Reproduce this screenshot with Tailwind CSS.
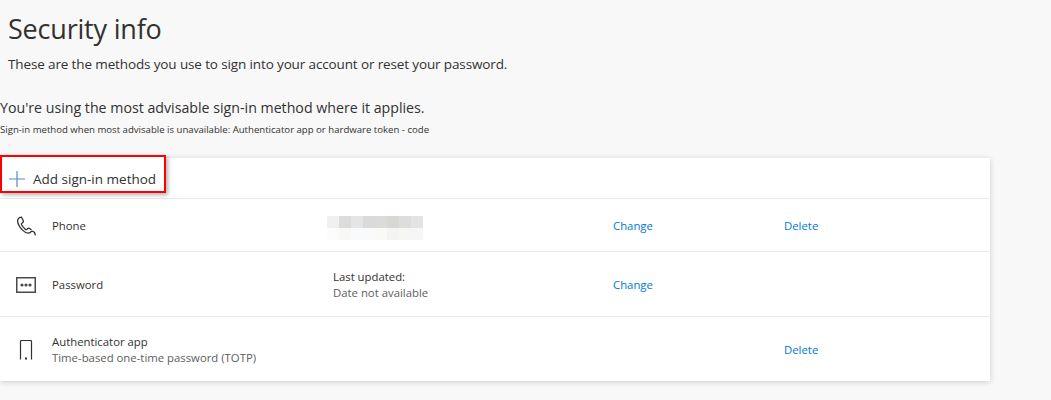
<!DOCTYPE html>
<html lang="en">
<head>
  <meta charset="UTF-8">
  <title>Security info</title>
  <script src="https://cdn.jsdelivr.net/npm/@tailwindcss/browser@4"></script>
</head>
<body class="h-[400px] overflow-hidden bg-[#f8f8f8] font-['Open_Sans',sans-serif] text-[#323130]">

  <!-- Heading -->
  <div class="pl-2 pt-[11px]">
    <h1 class="text-[27px] leading-[36px] tracking-[-0.2px]">Security info</h1>
    <p class="mt-[8px] text-[13.5px] leading-[18px] tracking-[-0.13px]">These are the methods you use to sign into your account or reset your password.</p>
  </div>

  <div class="mt-[25px]">
    <p class="text-[14.2px] leading-[20px]">You're using the most advisable sign-in method where it applies.</p>
    <p class="mt-[6px] text-[9.6px] leading-[12px]">Sign-in method when most advisable is unavailable: Authenticator app or hardware token - code</p>
  </div>

  <!-- Methods card -->
  <div class="relative mt-[22px] w-[990px] bg-white shadow-[0_1px_6px_rgba(0,0,0,0.18)]">
    <div class="h-[41px] border-b border-[#e8e8e8]"></div>

    <!-- Highlighted add button -->
    <div class="absolute left-0 top-[-3px] flex h-[38px] w-[166px] items-center border-2 border-[#ff0000] bg-white pl-[7px] pt-[10px] shadow-[2px_2px_4px_rgba(0,0,0,0.3)]">
      <svg class="h-4 w-4 shrink-0" viewBox="0 0 16 16"><path d="M8 0v16M0 8h16" stroke="#4f8fca" stroke-width="1.2" fill="none"/></svg>
      <span class="ml-[8px] text-[13.5px] leading-[18px]">Add sign-in method</span>
    </div>

    <!-- Phone -->
    <div class="grid h-[53px] grid-cols-[52px_280px_281px_171px_1fr] items-center border-b border-[#e8e8e8] pt-[2px] text-[11.35px] leading-[16px]">
      <div class="pl-[16px]">
        <svg class="h-[20px] w-[21px]" viewBox="0 0 21 20" fill="none"><path d="M5.5 1.2C3.6 1.2 1.2 2.6 1.6 5.4c.5 3.2 2.7 6.6 5.2 9 1.6 1.500 3.400 2.800 5.200 2.800 1.300 0 2.300-.7 3-1.500.6-.7 1.500-.7 2.200-.2l1.300 1 .8 2.300M5.500 1.200l1.800 3.600c.3.600.1 1.200-.4 1.600l-1 .8c-.5.400-.6 1-.3 1.600.9 1.700 2.200 3.200 3.700 4.500.5.400 1.200.4 1.700 0l.8-.7c.5-.4 1.200-.5 1.800-.1l1.500 1" stroke="#323130" stroke-width="1.300" stroke-linecap="round" stroke-linejoin="round"/></svg>
      </div>
      <div>Phone</div>
      <div class="-ml-[5px] mt-[4px] grid w-[96px] grid-cols-8">
        <span class="h-3 bg-[#f0f0f0]"></span><span class="h-3 bg-[#dcdcda]"></span><span class="h-3 bg-[#e4e6e5]"></span><span class="h-3 bg-[#dadada]"></span><span class="h-3 bg-[#dbdbd9]"></span><span class="h-3 bg-[#d8d7d4]"></span><span class="h-3 bg-[#dddddc]"></span><span class="h-3 bg-[#e2e3e5]"></span>
        <span class="h-3 bg-[#fcfcfc]"></span><span class="h-3 bg-[#f8f8f6]"></span><span class="h-3 bg-[#f8fafc]"></span><span class="h-3 bg-[#fafafa]"></span><span class="h-3 bg-[#f9f9f8]"></span><span class="h-3 bg-[#f4f4f2]"></span><span class="h-3 bg-[#f6f6f5]"></span><span class="h-3 bg-[#f5f6f6]"></span>
      </div>
      <a class="text-[#0078d4]">Change</a>
      <a class="text-[#0078d4]">Delete</a>
    </div>

    <!-- Password -->
    <div class="grid h-[65px] grid-cols-[52px_280px_281px_171px_1fr] items-center border-b border-[#e8e8e8] pt-[2px] text-[11.35px] leading-[16px]">
      <div class="pl-[16px]">
        <svg class="h-[18px] w-[20px]" viewBox="0 0 20 18" fill="none"><rect x="0.75" y="1.750" width="18.500" height="14.500" stroke="#4a4a4a" stroke-width="1.500"/><circle cx="6" cy="9" r="1.600" fill="#4a4a4a"/><circle cx="10" cy="9" r="1.600" fill="#4a4a4a"/><circle cx="14" cy="9" r="1.600" fill="#4a4a4a"/></svg>
      </div>
      <div>Password</div>
      <div class="pl-px">
        <div>Last updated:</div>
        <div class="text-[#605e5c]">Date not available</div>
      </div>
      <a class="text-[#0078d4]">Change</a>
      <span></span>
    </div>

    <!-- Authenticator app -->
    <div class="grid h-[64px] grid-cols-[52px_732px_1fr] items-center pt-[2px] text-[11.35px] leading-[16px]">
      <div class="pl-[19px]">
        <svg class="h-[20px] w-[14px]" viewBox="0 0 14 20" fill="none"><path d="M1.500 19.500V1.500a1 1 0 0 1 1-1h9a1 1 0 0 1 1 1v18" stroke="#323130" stroke-width="1.200"/><rect x="6" y="17.500" width="2" height="2" fill="#323130"/></svg>
      </div>
      <div>
        <div>Authenticator app</div>
        <div class="text-[#605e5c]">Time-based one-time password (TOTP)</div>
      </div>
      <a class="text-[#0078d4]">Delete</a>
    </div>
  </div>
</body>
</html>
